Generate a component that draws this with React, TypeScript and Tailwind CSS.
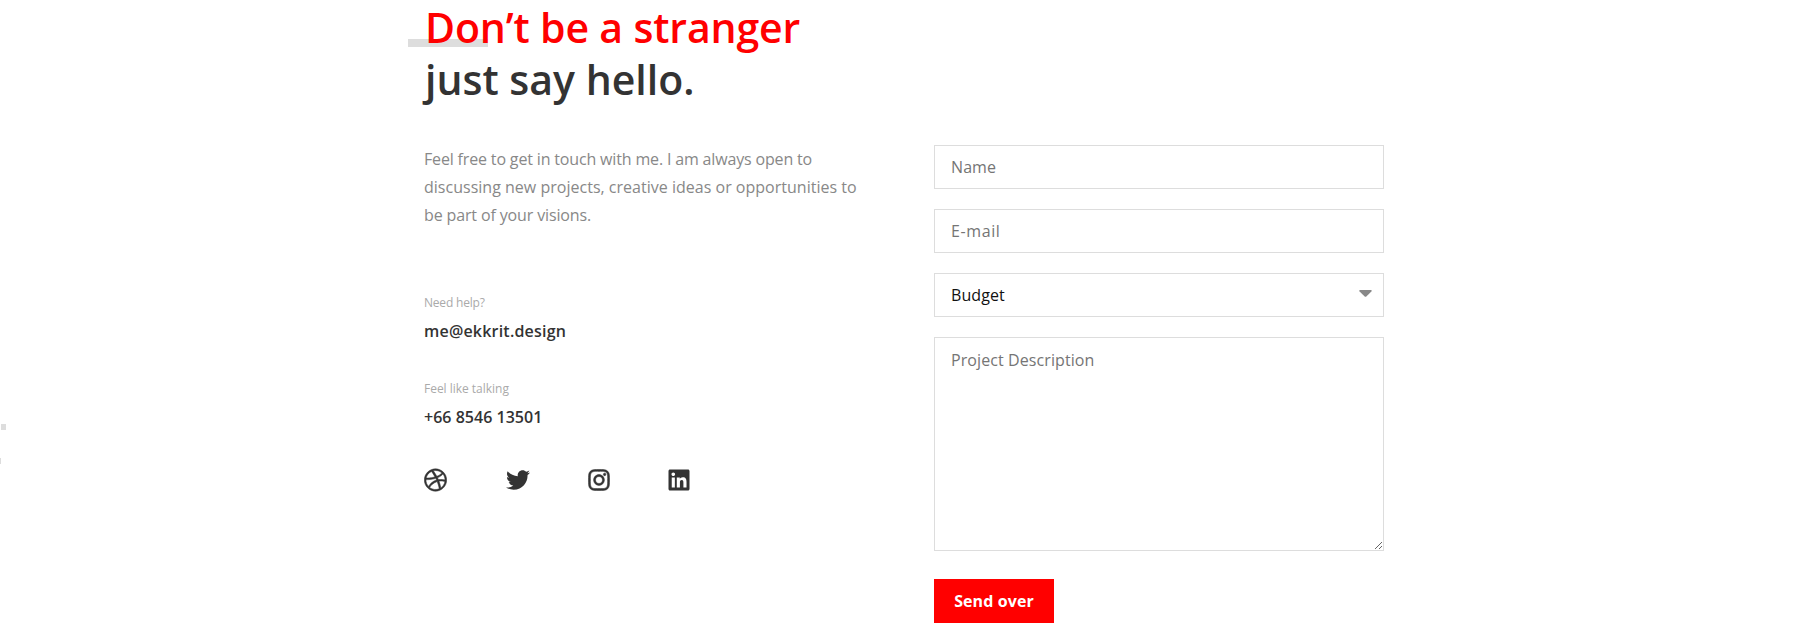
import { FaDribbble, FaInstagram, FaLinkedin, FaTwitter } from "react-icons/fa";

const field =
  "block w-full rounded-none border border-[#ddd] bg-white px-4 text-base text-[#111] outline-none placeholder:text-[#757575] placeholder:opacity-100";

function Contact({ label, value, labelClass, valueClass }: { label: string; value: string; labelClass: string; valueClass: string }) {
  return (
    <div>
      <p className={`text-xs leading-5 text-[#aaa] ${labelClass}`}>{label}</p>
      <p className={`mt-1 text-base leading-7 font-semibold text-[#333] ${valueClass}`}>{value}</p>
    </div>
  );
}

export default function App() {
  return (
    <main className="relative h-[640px] bg-white font-['Open_Sans',sans-serif]">
      <span className="absolute top-[424px] left-px h-1.5 w-[5px] bg-[#ddd]" />
      <span className="absolute top-[458px] left-0 h-1.5 w-px bg-[#ddd]" />
      <div className="ml-[424px] w-[960px]">
        <h1 className="relative isolate pt-px pl-px text-[41px] leading-[52px] font-semibold text-[#333]">
          <span className="absolute top-[39px] -left-4 -z-10 h-2 w-20 bg-[#ddd]" />
          <span className="block tracking-[-0.15px] text-[#f00]">Don’t be a stranger</span>
          <span className="block">just say hello.</span>
        </h1>
        <div className="mt-10 flex justify-between">
          <section className="w-[450px]">
            <p className="text-base leading-7 whitespace-nowrap text-[#888]">
              <span className="block tracking-[-0.16px]">Feel free to get in touch with me. I am always open to</span>
              <span className="block tracking-[0.014px]">discussing new projects, creative ideas or opportunities to</span>
              <span className="block tracking-[-0.134px]">be part of your visions.</span>
            </p>
            <div className="mt-16 flex flex-col gap-[34px]">
              <Contact label="Need help?" value="me@ekkrit.design" labelClass="tracking-[-0.2px]" valueClass="tracking-[0.2px]" />
              <Contact label="Feel like talking" value="+66 8546 13501" labelClass="tracking-[-0.02px]" valueClass="tracking-[0.02px]" />
            </div>
            <div className="mt-[37px] flex text-2xl text-[#333]">
              <FaDribbble className="mr-[59px] w-[23px] stroke-[#333] [stroke-width:12]" />
              <FaTwitter className="mr-[57px] w-6" />
              <FaInstagram className="mr-14 w-6 stroke-[#333] [stroke-width:12]" />
              <FaLinkedin className="w-6" />
            </div>
          </section>
          <form className="w-[450px]" onSubmit={(e) => e.preventDefault()}>
            <input className={`${field} h-11 tracking-[0.08px]`} placeholder="Name" />
            <input className={`${field} mt-5 h-11 tracking-[0.6px]`} placeholder="E-mail" />
            <div className="relative mt-5">
              <select className={`${field} h-11 appearance-none tracking-[0.08px]`}>
                <option>Budget</option>
              </select>
              <svg className="pointer-events-none absolute top-[17px] right-3 h-[7px] w-[13px]" viewBox="0 0 13 7">
                <path d="M0.8 0H12.2Q13 0.6 12.4 1.4L7.3 6.5Q6.5 7.2 5.7 6.5L0.6 1.4Q0 0.6 0.8 0Z" fill="#888" />
              </svg>
            </div>
            <textarea className={`${field} mt-5 h-[214px] resize pt-2.5 leading-6 tracking-[0.09px]`} placeholder="Project Description" />
            <button className="mt-7 h-11 w-[120px] bg-[#f00] text-base font-bold tracking-[0.1px] text-white">Send over</button>
          </form>
        </div>
      </div>
    </main>
  );
}
